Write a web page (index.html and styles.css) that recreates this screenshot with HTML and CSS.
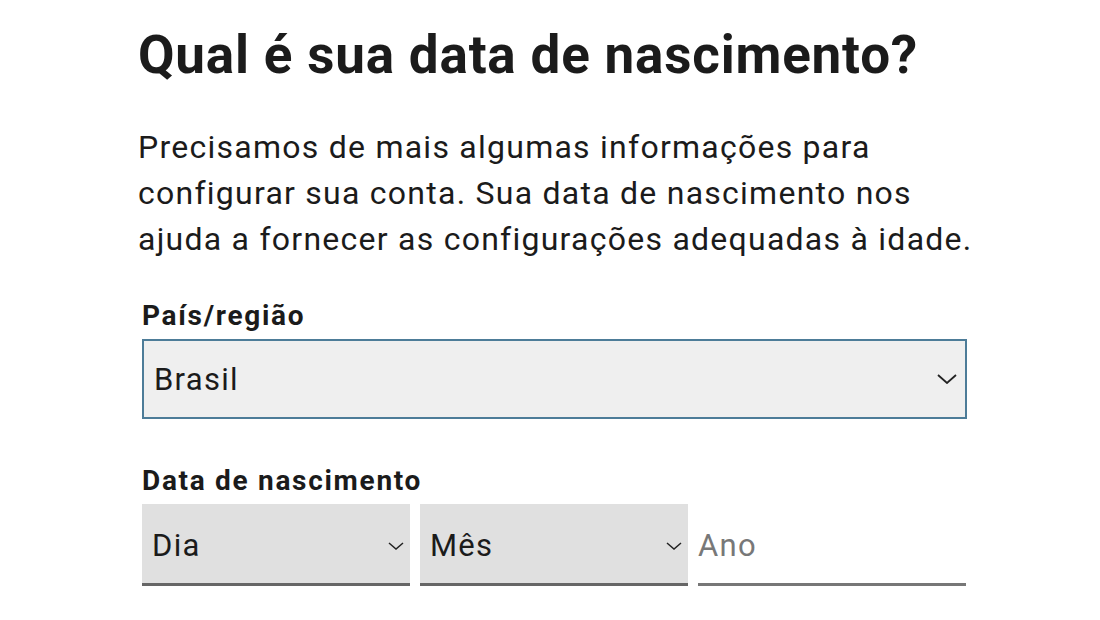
FILE: index.html
```html
<!DOCTYPE html>
<html>
  <head>
    <title>Data de nascimento</title>
    <link rel="stylesheet" href="styles.css">
  </head>
  <body>
    <div class="container">
      <h1 class="title">Qual é sua data de nascimento?</h1>
      <p class="intro">
        Precisamos de mais algumas informações para<br />
        configurar sua conta. Sua data de nascimento nos<br />
        ajuda a fornecer as configurações adequadas à idade.
      </p>

      <div class="field">
        <label class="label">País/região</label>
        <div class="select country">
          <span>Brasil</span>
          <svg class="chevron" width="20" height="10" viewBox="0 0 20 10">
            <path d="M1 1l9 8 9-8" fill="none" stroke="#222" stroke-width="1.8" />
          </svg>
        </div>
      </div>

      <div class="field birth">
        <label class="label">Data de nascimento</label>
        <div class="date-row">
          <div class="select small">
            <span>Dia</span>
            <svg class="chevron" width="16" height="8" viewBox="0 0 16 8">
              <path d="M1 1l7 6 7-6" fill="none" stroke="#222" stroke-width="1.5" />
            </svg>
          </div>
          <div class="select small">
            <span>Mês</span>
            <svg class="chevron" width="16" height="8" viewBox="0 0 16 8">
              <path d="M1 1l7 6 7-6" fill="none" stroke="#222" stroke-width="1.5" />
            </svg>
          </div>
          <div class="year">Ano</div>
        </div>
      </div>
    </div>
  </body>
</html>
```

FILE: styles.css
```css
body {
  margin: 0;
  background: #fff;
  color: #1b1b1b;
  font-family: Roboto, "Liberation Sans", sans-serif;
}
.container {
  width: 830px;
  margin-left: 138px;
  padding-top: 23px;
}
.title {
  margin: 0;
  font-size: 53px;
  font-weight: 700;
  line-height: 64px;
  letter-spacing: 0.8px;
  white-space: nowrap;
  color: #1b1b1b;
}
.intro {
  margin: 37px 0 0;
  font-size: 32px;
  line-height: 46px;
  letter-spacing: 1.25px;
  white-space: nowrap;
  color: #1b1b1b;
}
.field {
  padding-left: 4px;
  margin-top: 36px;
}
.field.birth {
  margin-top: 44px;
}
.label {
  display: block;
  font-size: 28px;
  font-weight: 700;
  line-height: 36px;
  letter-spacing: 1.7px;
  margin-bottom: 5px;
}
.select {
  display: flex;
  align-items: center;
  justify-content: space-between;
  box-sizing: border-box;
  font-size: 31px;
  letter-spacing: 1.3px;
}
.country {
  width: 825px;
  height: 80px;
  padding: 0 8px 0 10px;
  background: #efefef;
  border: 2px solid #4d7c98;
}
.date-row {
  display: flex;
  gap: 10px;
  margin-top: 2px;
}
.small {
  width: 268px;
  height: 82px;
  padding: 4px 6px 0 10px;
  background: #e0e0e0;
  border-bottom: 3px solid #666;
}
.year {
  display: flex;
  align-items: center;
  box-sizing: border-box;
  width: 268px;
  height: 82px;
  padding-top: 4px;
  font-size: 31px;
  letter-spacing: 1.3px;
  color: #787878;
  border-bottom: 3px solid #777;
}
```
